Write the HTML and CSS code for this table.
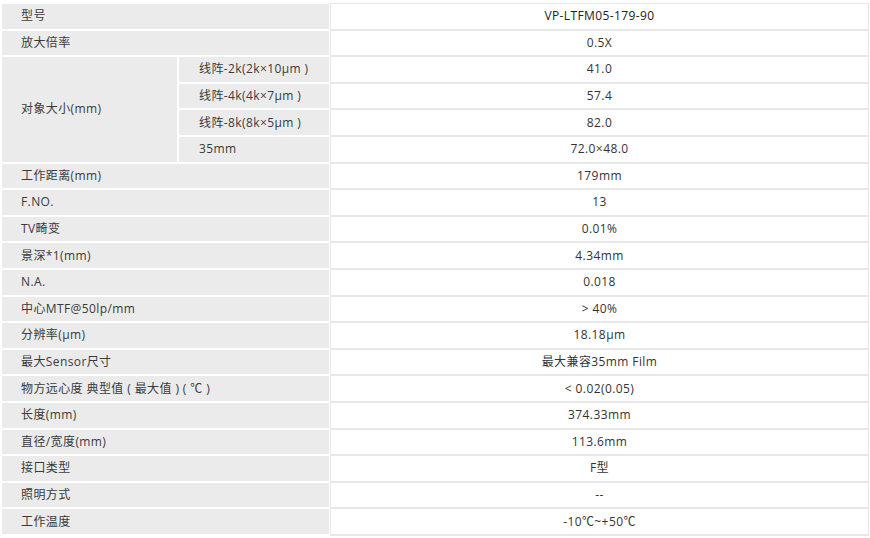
FILE: index.html
```html
<!DOCTYPE html>
<html lang="zh-CN">
<head>
<meta charset="utf-8">
<title>VP-LTFM05-179-90</title>
<link rel="stylesheet" href="styles.css">
</head>
<body>
<div class="wrap">
<table class="spec">
  <colgroup>
    <col class="c1"><col class="c2"><col class="c3">
  </colgroup>
  <tbody>
    <tr class="first"><td class="lab" colspan="2">型号</td><td class="val strong">VP-LTFM05-179-90</td></tr>
    <tr><td class="lab" colspan="2">放大倍率</td><td class="val">0.5X</td></tr>
    <tr><td class="lab" rowspan="4">对象大小(mm)</td><td class="lab sub">线阵-2k(2k×10μm )</td><td class="val">41.0</td></tr>
    <tr><td class="lab sub">线阵-4k(4k×7μm )</td><td class="val">57.4</td></tr>
    <tr><td class="lab sub">线阵-8k(8k×5μm )</td><td class="val">82.0</td></tr>
    <tr><td class="lab sub">35mm</td><td class="val">72.0×48.0</td></tr>
    <tr><td class="lab" colspan="2">工作距离(mm)</td><td class="val">179mm</td></tr>
    <tr><td class="lab" colspan="2">F.NO.</td><td class="val">13</td></tr>
    <tr><td class="lab" colspan="2">TV畸变</td><td class="val">0.01%</td></tr>
    <tr><td class="lab" colspan="2">景深*1(mm)</td><td class="val">4.34mm</td></tr>
    <tr><td class="lab" colspan="2">N.A.</td><td class="val">0.018</td></tr>
    <tr><td class="lab" colspan="2">中心MTF@50lp/mm</td><td class="val">&gt; 40%</td></tr>
    <tr><td class="lab" colspan="2">分辨率(μm)</td><td class="val">18.18μm</td></tr>
    <tr><td class="lab" colspan="2">最大Sensor尺寸</td><td class="val">最大兼容35mm Film</td></tr>
    <tr><td class="lab" colspan="2">物方远心度 典型值 ( 最大值 ) ( ℃ )</td><td class="val">&lt; 0.02(0.05)</td></tr>
    <tr><td class="lab" colspan="2">长度(mm)</td><td class="val">374.33mm</td></tr>
    <tr><td class="lab" colspan="2">直径/宽度(mm)</td><td class="val">113.6mm</td></tr>
    <tr><td class="lab" colspan="2">接口类型</td><td class="val">F型</td></tr>
    <tr><td class="lab" colspan="2">照明方式</td><td class="val">--</td></tr>
    <tr><td class="lab" colspan="2">工作温度</td><td class="val">-10℃~+50℃</td></tr>
  </tbody>
</table>
</div>
</body>
</html>
```

FILE: styles.css
```css
html, body {
  margin: 0;
  padding: 0;
  background: #fff;
}

.wrap {
  padding: 3px 1px 0 2px;
}

.spec {
  width: 867px;
  border-collapse: separate;
  border-spacing: 0;
  table-layout: fixed;
  font-family: "Open Sans", "Noto Sans CJK SC", sans-serif;
  font-size: 12px;
  letter-spacing: 0.4px;
  color: #3a3a3a;
}

.c1 { width: 176px; }
.c2 { width: 152px; }
.c3 { width: 539px; }

.spec td {
  height: 24.6px;
  padding: 0;
  border-bottom: 2px solid #fff;
  line-height: 16px;
  vertical-align: middle;
  white-space: nowrap;
}

.first td {
  border-top: 1px solid #fff;
}

.lab {
  background: #ebebeb;
  padding-left: 19px !important;
  border-right: 1px solid #fff;
  text-align: left;
}

.lab.sub {
  padding-left: 20px !important;
  border-left: 1px solid #fff;
}

.val {
  background: #fff;
  text-align: center;
  color: #333;
  border-left: 1px solid #e6e6e6;
  border-right: 1px solid #e6e6e6;
  border-bottom: 2px solid #e8e8e8 !important;
}

.first .val {
  border-top: 1px solid #e8e8e8;
}

.val.strong {
  color: #222;
}
```
